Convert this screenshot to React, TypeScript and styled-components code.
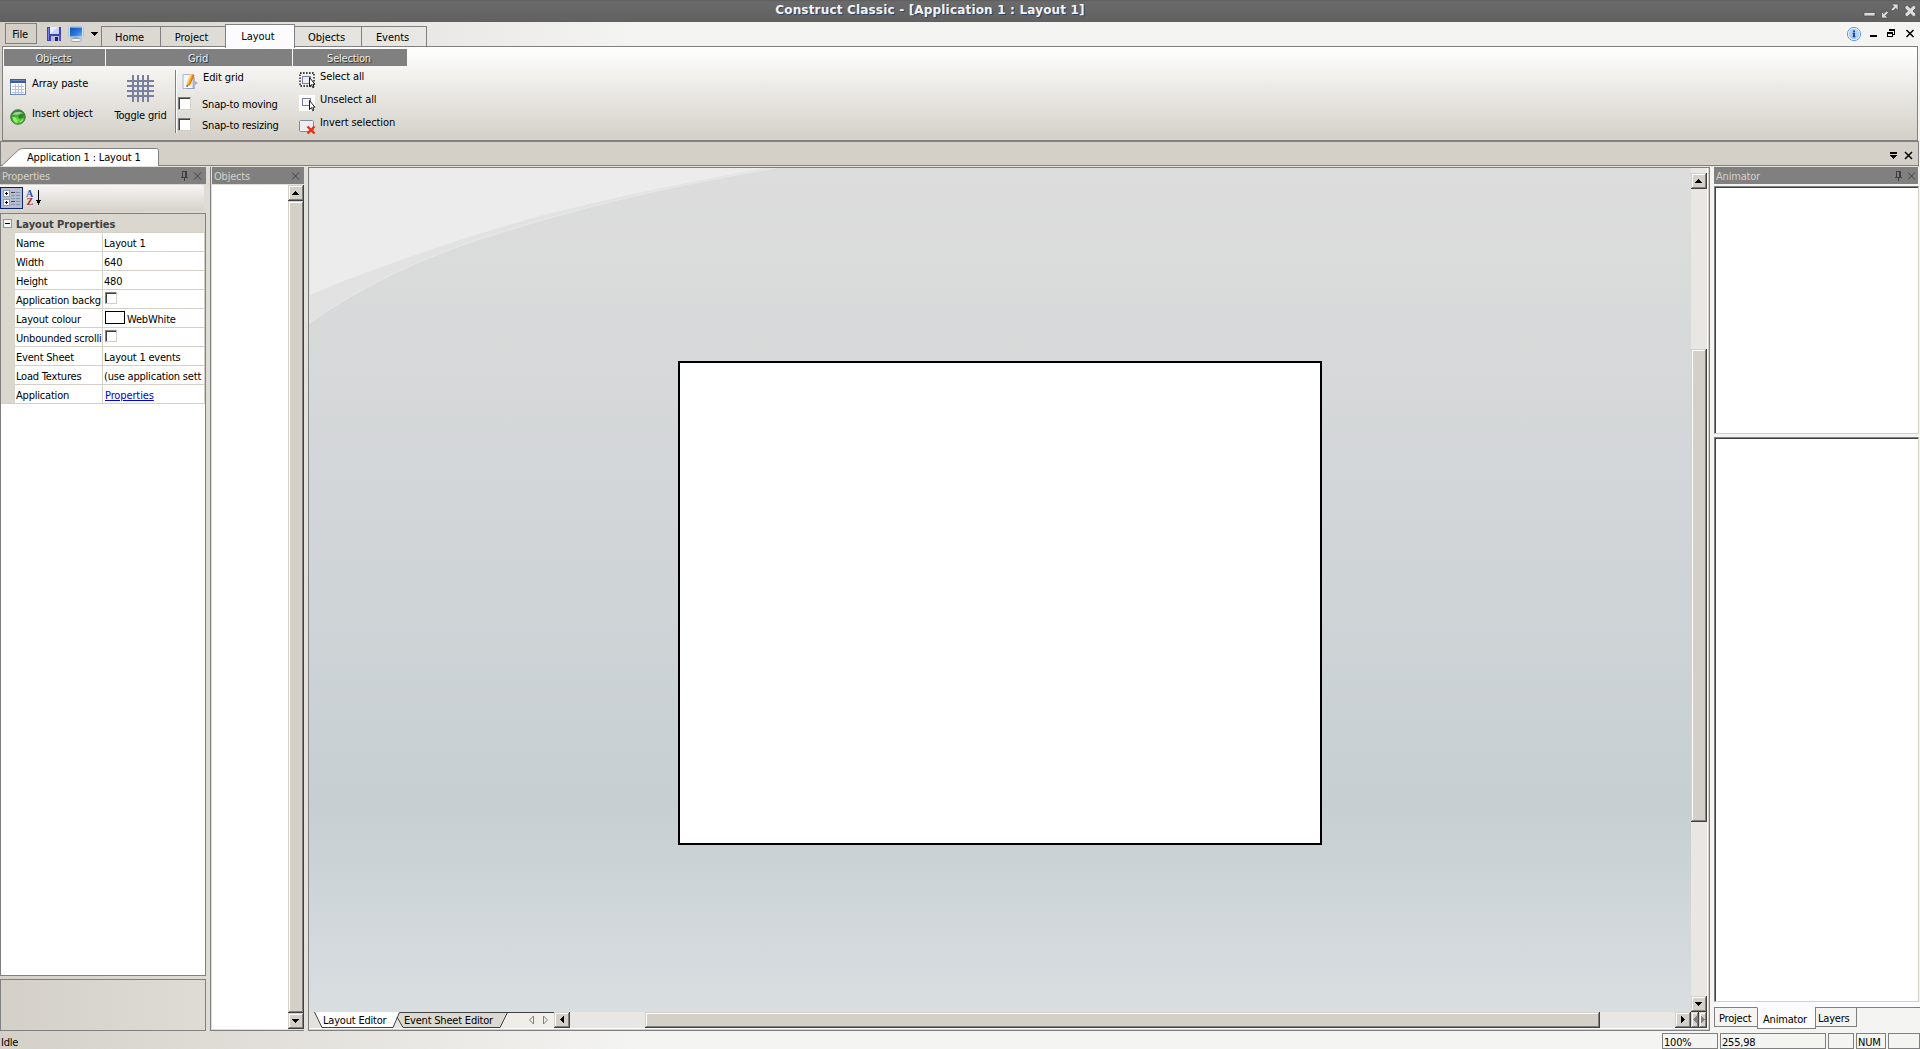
import React from "react";
import styled, { createGlobalStyle, css } from "styled-components";

const face = "#d4d0c8";
const gray = "#808080";
const dark = "#404040";

const GlobalStyle = createGlobalStyle`
  * { box-sizing: border-box; }
  html, body { margin: 0; padding: 0; overflow: hidden; }
  body {
    font-family: "DejaVu Sans Condensed", "DejaVu Sans", sans-serif;
    font-stretch: condensed;
    font-size: 11px;
    line-height: 16px;
    letter-spacing: -0.2px;
    color: #000;
    white-space: nowrap;
    cursor: default;
  }
  svg { display: block; flex: none; }
`;

const raised = css`
  background: ${face};
  box-shadow: inset -1px -1px 0 ${dark}, inset 1px 1px 0 ${face},
    inset -2px -2px 0 ${gray}, inset 2px 2px 0 #fff;
`;

const Window = styled.div`
  width: 1920px;
  height: 1049px;
  display: flex;
  flex-direction: column;
  background: linear-gradient(to right, ${face} 0, #f4f4f2 640px);
`;

/* ---------- title bar ---------- */
const TitleBar = styled.header`
  height: 22px;
  display: flex;
  background: linear-gradient(#5c5c5c 0, #6a6a6a 2px, #616161 21px, #5c5c5c 22px);
`;
const Title = styled.h1`
  flex: 1;
  margin: 0;
  text-align: center;
  font: bold 12px/21px "DejaVu Sans", sans-serif;
  font-stretch: normal;
  letter-spacing: 0.18px;
  color: #f2f2f2;
  text-shadow: 1px 1px 0 #2d4468;
`;
const TitleButtons = styled.div`
  width: 60px;
  padding-left: 3px;
`;

/* ---------- menu row ---------- */
const MenuRow = styled.nav`
  height: 24px;
  display: flex;
  align-items: flex-start;
`;
const FileButton = styled.button`
  width: 32px;
  height: 21px;
  margin: 1px 10px 0 5px;
  padding: 2px 2px 0 0;
  border: 1px solid ${gray};
  background: ${face};
  font: inherit;
  letter-spacing: inherit;
`;
const QuickIcons = styled.div`
  display: flex;
  width: 54px;
  height: 24px;
  padding-top: 4px;
`;
const RibbonTab = styled.div<{ $w: number; $active?: boolean }>`
  width: ${(p) => p.$w}px;
  height: ${(p) => (p.$active ? 24 : 21)}px;
  margin-top: ${(p) => (p.$active ? 2 : 4)}px;
  margin-right: -1px;
  padding-top: ${(p) => (p.$active ? 4 : 3)}px;
  padding-right: ${(p) => (p.$active ? 4 : 3)}px;
  text-align: center;
  letter-spacing: -0.05px;
  border: 1px solid ${gray};
  border-bottom: ${(p) => (p.$active ? "0" : `1px solid ${gray}`)};
  background: ${(p) => (p.$active ? "#fcfcfe" : "transparent")};
  position: relative;
  z-index: ${(p) => (p.$active ? 2 : 1)};
`;
const MdiButtons = styled.div`
  margin-left: auto;
  width: 74px;
  height: 24px;
  padding-top: 4px;
`;

/* ---------- ribbon ---------- */
const Ribbon = styled.section`
  width: 1916px;
  height: 95px;
  flex: none;
  margin-left: 2px;
  padding: 2px 0 0 1px;
  display: flex;
  border: 1px solid ${gray};
  background: linear-gradient(#fff, ${face});
`;
const Group = styled.div<{ $w: number }>`
  width: ${(p) => p.$w}px;
  margin-right: 1px;
`;
const GroupTitle = styled.div`
  height: 17px;
  padding: 2px 2px 0 0;
  line-height: 15px;
  text-align: center;
  background: ${gray};
  color: #ececec;
  text-shadow: 1px 1px 0 #333;
`;
const GroupBody = styled.div<{ $top: number; $row?: boolean }>`
  display: flex;
  flex-direction: ${(p) => (p.$row ? "row" : "column")};
  padding-top: ${(p) => p.$top}px;
`;
const Command = styled.div<{ $h: number; $left?: number; $gap?: number }>`
  display: flex;
  align-items: flex-start;
  gap: ${(p) => p.$gap ?? 6}px;
  height: ${(p) => p.$h}px;
  padding-left: ${(p) => p.$left ?? 6}px;
  letter-spacing: -0.1px;
  svg { margin-top: 3px; }
`;
const BigCommand = styled.div`
  width: 69px;
  display: flex;
  flex-direction: column;
  align-items: center;
  gap: 6px;
  padding-top: 5px;
`;
const Separator = styled.div`
  width: 2px;
  height: 63px;
  border-left: 1px solid ${gray};
  border-right: 1px solid #fff;
`;
const Check = styled.span<{ $size?: number }>`
  flex: none;
  width: ${(p) => p.$size ?? 13}px;
  height: ${(p) => p.$size ?? 13}px;
  background: #fff;
  border: 1px solid;
  border-color: ${gray} ${face} ${face} ${gray};
  box-shadow: inset 1px 1px 0 ${dark};
`;
const CheckRow = styled.label`
  display: flex;
  gap: 11px;
  height: 21px;
  padding-left: 1px;
`;

/* ---------- document tabs ---------- */
const DocBar = styled.div`
  height: 26px;
  flex: none;
  display: flex;
  width: 1919px;
  border: 1px solid ${gray};
  border-bottom: 1px solid #e4e2dc;
  background: linear-gradient(${gray}, ${gray}) 0 23px / 100% 1px no-repeat, ${face};
`;
const DocTab = styled.div`
  position: relative;
  width: 158px;
  height: 24px;
  padding: 8px 0 0 26px;
  svg { position: absolute; left: 0; top: 5px; }
  span { position: relative; letter-spacing: -0.16px; }
`;
const DocButtons = styled.div`
  margin-left: auto;
  width: 29px;
  padding-top: 9px;
`;

/* ---------- main area ---------- */
const Main = styled.main`
  height: 864px;
  flex: none;
  display: flex;
`;
const PaneHeader = styled.div`
  height: 17px;
  flex: none;
  display: flex;
  padding: 2px 4px 0 2px;
  line-height: 15px;
  background: ${gray};
  color: ${face};
  svg { margin: 2px 0 0 auto; }
`;
const PropertiesPane = styled.aside`
  width: 206px;
  margin-right: 4px;
  display: flex;
  flex-direction: column;
`;
const PropToolbar = styled.div`
  height: 26px;
  width: 204px;
  margin: 1px 0 2px;
  padding-top: 2px;
  display: flex;
  gap: 3px;
  background: linear-gradient(#f6f5f4, #d6d2ca);
  border-radius: 0 2px 2px 0;
`;
const SortButton = styled.div<{ $on?: boolean }>`
  width: ${(p) => (p.$on ? 23 : 20)}px;
  height: 22px;
  ${(p) => p.$on ? css`border: 1px solid #0a246a; background: #b6bdd2;` : css`padding-top: 2px;`}
`;
const PropGrid = styled.div`
  height: 763px;
  border: 1px solid ${gray};
  background: #fff;
`;
const Category = styled.div`
  height: 18px;
  padding: 3px 0 0 2px;
  display: flex;
  gap: 4px;
  font-weight: bold;
  color: ${dark};
  background: #dad7cf;
  letter-spacing: 0;
  svg { margin-top: 2px; }
`;
const PropRow = styled.div`
  height: 19px;
  width: 204px;
  display: grid;
  grid-template-columns: 87px 101px;
  column-gap: 1px;
  padding: 1px 1px 0 14px;
  background: linear-gradient(to right, #dad7cf 14px, ${face} 14px);
`;
const Cell = styled.div`
  overflow: hidden;
  padding: 3px 0 0 1px;
  background: #fff;
  display: flex;
`;
const WidgetCell = styled(Cell)`
  padding-left: 2px;
  ${Check} { margin-top: -1px; }
`;
const PropEnd = styled.div`
  height: 1px;
  background: ${face};
`;
const Swatch = styled.span`
  width: 20px;
  height: 13px;
  margin: -1px 2px 0 0;
  border: 1px solid #000;
  background: #fff;
`;
const Link = styled.span`
  color: #0000e0;
  text-decoration: underline;
  letter-spacing: -0.12px;
`;
const HelpBox = styled.div`
  height: 52px;
  margin-top: 3px;
  border: 1px solid ${gray};
`;

const ObjectsPane = styled.aside`
  width: 94px;
  margin-right: 4px;
  display: flex;
  flex-direction: column;
  border-left: 1px solid ${gray};
  border-bottom: 1px solid ${gray};
  padding-left: 1px;
`;
const ObjectsBody = styled.div`
  margin-top: 1px;
  height: 844px;
  display: flex;
  background: #fff;
  justify-content: flex-end;
`;
const Bar = styled.div<{ $h?: boolean }>`
  display: flex;
  flex: none;
  flex-direction: ${(p) => (p.$h ? "row" : "column")};
  ${(p) => (p.$h ? "height: 16px; flex: 1;" : "width: 16px;")}
  background: #e8e7e3;
`;
const ScrollButton = styled.div<{ $w?: number }>`
  width: ${(p) => p.$w ?? 16}px;
  height: 16px;
  flex: none;
  display: flex;
  align-items: center;
  justify-content: center;
  padding: 0 1px 1px 0;
  ${raised}
`;
const Track = styled.div<{ $len: number }>`
  flex: 0 0 ${(p) => p.$len}px;
`;
const Thumb = styled.div`
  flex: 1;
  ${raised}
`;

const Editor = styled.section`
  width: 1402px;
  height: 864px;
  margin-right: 4px;
  display: flex;
  flex-direction: column;
  border: 1px solid ${gray};
  box-shadow: inset -1px -1px 0 ${face}, inset -2px -2px 0 #fff;
`;
const EditorTop = styled.div`
  display: flex;
  height: 844px;
`;
const Canvas = styled.div`
  position: relative;
  width: 1382px;
  height: 844px;
  background: linear-gradient(#dddddd 0, #dadbdb 100px, #d6d8d9 210px, #cfd4d7 420px, #c7cfd2 640px, #ccd3d6 700px, #d9dee1 844px);
`;
const Sheet = styled.div`
  position: absolute;
  left: 369px;
  top: 193px;
  width: 644px;
  height: 484px;
  border: 2px solid #000;
  background: #fff;
`;
const EditorBottom = styled.div`
  display: flex;
  height: 16px;
  width: 1398px;
`;
const SheetTabs = styled.div`
  position: relative;
  width: 245px;
  height: 16px;
  display: flex;
  padding: 1px 0 0 14px;
  > svg { position: absolute; left: 0; top: 0; }
`;
const TabLabel = styled.span<{ $w: number }>`
  position: relative;
  width: ${(p) => p.$w}px;
`;

const AnimatorPane = styled.aside`
  width: 206px;
  display: flex;
  flex-direction: column;
`;
const AnimHeader = styled(PaneHeader)`
  width: 204px;
  padding-right: 2px;
`;
const Sunken = styled.div<{ $h: number; $mt: number }>`
  height: ${(p) => p.$h}px;
  width: 205px;
  margin-top: ${(p) => p.$mt}px;
  background: #fff;
  border: 1px solid;
  border-color: ${gray} ${face} ${face} ${gray};
  box-shadow: inset 1px 1px 0 ${dark};
`;
const PaneTabs = styled.div`
  height: 27px;
  display: flex;
  padding-top: 5px;
  background: linear-gradient(#fcfcfe 5px, ${gray} 5px, ${gray} 6px, transparent 6px);
`;
const PaneTab = styled.div<{ $w: number; $active?: boolean }>`
  width: ${(p) => p.$w}px;
  height: ${(p) => (p.$active ? 22 : 20)}px;
  margin-right: -1px;
  padding: ${(p) => (p.$active ? "4px 0 0 5px" : "3px 0 0 4px")};
  border: 1px solid ${gray};
  border-top-color: ${(p) => (p.$active ? "#fcfcfe" : gray)};
  background: ${(p) => (p.$active ? "#fcfcfe" : "transparent")};
  &:last-child { padding-left: 2px; }
`;

/* ---------- status bar ---------- */
const Status = styled.footer`
  height: 18px;
  display: flex;
  gap: 2px;
  padding: 2px 0 0 1px;
  line-height: 14px;
`;
const StatusText = styled.div`
  flex: 1;
  padding-top: 3px;
`;
const StatusPane = styled.div<{ $w: number }>`
  width: ${(p) => p.$w}px;
  height: 16px;
  padding: 2px 0 0 1px;
  border: 1px solid ${gray};
`;

/* ---------- drawings ---------- */
const Arrow = ({ dir, color = "#000" }: { dir: "up" | "down" | "left" | "right"; color?: string }) => {
  const d = {
    up: "M3 0h1v1h1v1h1v1h1v1H0V3h1V2h1V1h1z",
    down: "M0 0h7v1H6v1H5v1H4v1H3V3H2V2H1V1H0z",
    left: "M3 0h1v7H3V6H2V5H1V4H0V3h1V2h1V1h1z",
    right: "M0 0h1v1h1v1h1v1h1v1H3v1H2v1H1v1H0z",
  }[dir];
  const vertical = dir === "up" || dir === "down";
  return (
    <svg width={vertical ? 7 : 4} height={vertical ? 4 : 7} shapeRendering="crispEdges">
      <path d={d} fill={color} />
    </svg>
  );
};

const WindowIcons = () => (
  <svg width="57" height="22">
    <g stroke="#3c3c3c" strokeWidth="0.6" fill="#dcdcdc">
      <rect x="1" y="12.5" width="11" height="3.4" rx="0.6" />
      <path d="M28.5 4H35v6.5l-2.2-2.2-3 2.8-1.8-1.8 3-2.8z" />
      <path d="M25 18h-6.500v-6.500l2.200 2.200 3-2.800 1.800 1.800-3 2.800z" />
      <path d="M42 6.300l2.400-1 3 3 3-3 2.300 1v2l-2.700 2.700 2.700 2.700v2l-2.300 1-3-3-3 3-2.400-1v-2l2.700-2.700-2.700-2.700z" />
    </g>
  </svg>
);

const SaveIcon = () => (
  <svg width="16" height="18" viewBox="0 0 16 18">
    <rect x="0" y="1" width="14" height="14" fill="#3f43b0" />
    <rect x="1" y="2" width="1" height="12" fill="#777ce0" />
    <rect x="3" y="1" width="9" height="7" fill="#e9effa" />
    <path d="M4 7L11 1h1v7H4z" fill="#c4d5f4" />
    <rect x="4" y="10" width="8" height="5" fill="#b6b9d8" />
    <rect x="8" y="11" width="3" height="4" fill="#1f2270" />
    <rect x="12" y="9" width="2" height="6" fill="#5356c8" />
  </svg>
);
const MonitorIcon = () => (
  <svg width="18" height="18" viewBox="0 0 18 18">
    <defs>
      <linearGradient id="screen" x1="0" y1="0" x2="1" y2="1">
        <stop offset="0" stopColor="#0c4fb8" />
        <stop offset="0.6" stopColor="#2c7be0" />
        <stop offset="1" stopColor="#6db8f4" />
      </linearGradient>
    </defs>
    <rect x="0.5" y="0.5" width="15" height="11" rx="1" fill="#d7e4f4" stroke="#b6c4d8" />
    <rect x="2" y="1.5" width="12" height="9" fill="url(#screen)" />
    <path d="M6 11.5h4l1 2H5z" fill="#7f90a6" />
    <ellipse cx="8" cy="14" rx="5.5" ry="1.7" fill="#f2f4f6" stroke="#868e98" strokeWidth="0.8" />
  </svg>
);
const MdiIcons = () => (
  <svg width="74" height="18">
    <circle cx="8" cy="8" r="6.6" fill="#fff" stroke="#5b98ea" strokeWidth="1" />
    <circle cx="8" cy="8" r="4.9" fill="#b5d3fa" stroke="#8db9f2" strokeWidth="0.6" />
    <path d="M7 4.5h2v2H7zM6.5 7H9v3.3h.6v1H6.4v-1H7V8h-.5z" fill="#1c4a9c" />
    <g shapeRendering="crispEdges">
      <path d="M24 9h7v2h-7z" />
      <path d="M43 3h6v5h-1V5h-5z M43 3h1v2h-1z M47 8h2v1h-2z" />
      <path d="M41 6h6v5h-6z M42 8v2h4V8z" fillRule="evenodd" />
    </g>
    <path d="M60.5 4l7 7M67.5 4l-7 7" stroke="#000" strokeWidth="1.5" />
  </svg>
);
const ArrayIcon = () => (
  <svg width="16" height="16" shapeRendering="crispEdges">
    <path d="M0 0h16v16H0z" fill="#6f86ba" />
    <path d="M0 0h16v4H0z" fill="#3c5a9c" />
    <path d="M1 1h14v1H1z" fill="#6884bc" />
    <path d="M1 4h14v11H1z" fill="#fff" />
    <path d="M2 7h12M2 10h12M2 13h12M5.5 5v10M8.5 5v10M11.5 5v10" stroke="#b9c3dc" />
  </svg>
);
const InsertIcon = () => (
  <svg width="16" height="16">
    <defs>
      <radialGradient id="globe" cx="0.5" cy="0.7" r="0.65">
        <stop offset="0" stopColor="#6fe446" />
        <stop offset="0.6" stopColor="#38a52c" />
        <stop offset="1" stopColor="#2b7f2c" />
      </radialGradient>
    </defs>
    <circle cx="8" cy="8" r="7.3" fill="url(#globe)" stroke="#4f7a4f" />
    <path d="M2.500 6c1-4 9-4.500 11-1-2-1-3 0-5 .500S4.500 5.500 2.500 6z" fill="#cfe8ca" opacity="0.7" />
    <path d="M8 7l3-2 3 1-2 3-3 1z" fill="#2f8526" />
    <path d="M2.500 7.500l3 1 1.500 2.500.500 3c-3 0-5-3-5-6.500zM10 12.500l3.500-3.500c0 2-1 3.500-3 4.500z" fill="#9af06c" />
  </svg>
);
const GridIcon = () => (
  <svg width="27" height="27" shapeRendering="crispEdges">
    <path
      d="M5 0h2v27H5zM10 0h2v27h-2zM15 0h2v27h-2zM20 0h2v27h-2zM0 5h27v2H0zM0 10h27v2H0zM0 15h27v2H0zM0 20h27v2H0z"
      fill="#7b7f9e"
    />
  </svg>
);
const EditIcon = () => (
  <svg width="16" height="16">
    <path d="M1 1.5h10v14H1z" fill="#f4f7fd" stroke="#a9b6d4" />
    <path d="M12 4v12H4" fill="none" stroke="#7d88a8" />
    <path d="M13 8l3 2-3 2z" fill="#aab" />
    <path d="M8.5 1l4 1-4.5 10-3.5 2 .4-4z" fill="#f7a51c" />
    <path d="M11 1.5l1.5.6L8 12l-1.3.8z" fill="#e06f10" />
    <path d="M8.5 1l1.5.2L5.8 11l-1-.8z" fill="#ffd873" />
    <path d="M4.5 14l.3-2 1.4.9z" fill="#222" />
  </svg>
);
const Cursor = () => (
  <path d="M10.5 5.5v9l2-1.8 1.2 3 1.3-.6-1.1-2.9h2z" fill="#fff" stroke="#000" strokeWidth="0.9" />
);
const SelectIcon = () => (
  <svg width="17" height="17">
    <rect x="1" y="1" width="14" height="13" fill="none" stroke="#444" strokeWidth="1.8" strokeDasharray="1.6 1.4" />
    <rect x="3.5" y="4.5" width="8" height="7" fill="#eceef6" stroke="#7c80a0" />
    <Cursor />
  </svg>
);
const UnselectIcon = () => (
  <svg width="17" height="17">
    <rect width="16" height="16" fill="#fff" />
    <rect x="3.5" y="3.5" width="8" height="7" fill="#f4f4fa" stroke="#7c80a0" />
    <Cursor />
  </svg>
);
const InvertIcon = () => (
  <svg width="17" height="17">
    <rect x="0.5" y="2.5" width="14" height="11" rx="1" fill="#eeeef2" stroke="#85879c" />
    <path d="M8.5 8.5l7 7M15.5 8.5l-7 7" stroke="#e83010" strokeWidth="2.4" />
  </svg>
);
const PaneIcons = ({ pin }: { pin?: boolean }) => (
  <svg width="22" height="12">
    {pin && (
      <path
        d="M2 0h5v6h1v1H5v3H4V7H1V6h1zM3 1v5h2V1z"
        fill={dark}
        fillRule="evenodd"
        shapeRendering="crispEdges"
      />
    )}
    <path d="M14 1.5l7 7M21 1.5l-7 7" stroke={dark} />
  </svg>
);
const CategorizedIcon = () => (
  <svg width="21" height="20">
    {[3, 12].map((y) => (
      <g key={y} shapeRendering="crispEdges">
        <rect x="2.5" y={y - 0.5} width="6" height="6" fill="#fff" stroke="#8ba0bb" />
        <path d={`M4 ${y + 2}h3v1H4zM5 ${y + 1}h1v3H5z`} />
        <path d={`M10 ${y + 1}h4v1h-4z`} fill="#444" />
        <path d={`M10 ${y + 4}h4v1h-4zM15 ${y + 1}h4v1h-4zM15 ${y + 4}h4v1h-4z`} fill="#8a94a8" />
      </g>
    ))}
    <path d="M10 10.5h4M15 10.5h4" stroke="#8a94a8" />
  </svg>
);
const AlphaIcon = () => (
  <svg width="18" height="20">
    <text x="0" y="8" fontFamily="Liberation Serif" fontSize="10" fontWeight="bold" fill="#2a55a8" letterSpacing="0">A</text>
    <text x="0.4" y="16" fontFamily="Liberation Serif" fontSize="10" fontWeight="bold" fill="#983030" letterSpacing="0">Z</text>
    <path d="M12 1h1v10h2v1h-1v2h-1v2h-1v-2h-1v-2h-1v-1h2z" shapeRendering="crispEdges" />
  </svg>
);

const rows: [string, React.ReactNode][] = [
  ["Name", "Layout 1"],
  ["Width", "640"],
  ["Height", "480"],
  ["Application backg", <Check $size={12} />],
  ["Layout colour", <><Swatch />WebWhite</>],
  ["Unbounded scrolli", <Check $size={12} />],
  ["Event Sheet", "Layout 1 events"],
  ["Load Textures", "(use application sett"],
  ["Application", <Link>Properties</Link>],
];

export default function App() {
  return (
    <Window>
      <GlobalStyle />
      <TitleBar>
        <Title>Construct Classic - [Application 1 : Layout 1]</Title>
        <TitleButtons><WindowIcons /></TitleButtons>
      </TitleBar>

      <MenuRow>
        <FileButton>File</FileButton>
        <QuickIcons>
          <SaveIcon />
          <svg width="5" height="1" />
          <MonitorIcon />
          <svg width="12" height="14" shapeRendering="crispEdges">
            <path d="M5 6h7v1h-1v1h-1v1H9v1H8V9H7V8H6V7H5z" />
          </svg>
        </QuickIcons>
        <RibbonTab $w={60}>Home</RibbonTab>
        <RibbonTab $w={66}>Project</RibbonTab>
        <RibbonTab $w={70} $active>Layout</RibbonTab>
        <RibbonTab $w={68}>Objects</RibbonTab>
        <RibbonTab $w={66}>Events</RibbonTab>
        <MdiButtons><MdiIcons /></MdiButtons>
      </MenuRow>

      <Ribbon>
        <Group $w={101}>
          <GroupTitle>Objects</GroupTitle>
          <GroupBody $top={10}>
            <Command $h={30}><ArrayIcon />Array paste</Command>
            <Command $h={30}><InsertIcon />Insert object</Command>
          </GroupBody>
        </Group>
        <Group $w={186}>
          <GroupTitle>Grid</GroupTitle>
          <GroupBody $top={4} $row>
            <BigCommand><GridIcon />Toggle grid</BigCommand>
            <Separator />
            <div>
              <Command $h={27} $left={5} $gap={5}><EditIcon />Edit grid</Command>
              <CheckRow><Check />Snap-to moving</CheckRow>
              <CheckRow><Check />Snap-to resizing</CheckRow>
            </div>
          </GroupBody>
        </Group>
        <Group $w={114}>
          <GroupTitle>Selection</GroupTitle>
          <GroupBody $top={3}>
            <Command $h={23} $gap={4}><SelectIcon />Select all</Command>
            <Command $h={23} $gap={4}><UnselectIcon />Unselect all</Command>
            <Command $h={23} $gap={4}><InvertIcon />Invert selection</Command>
          </GroupBody>
        </Group>
      </Ribbon>

      <DocBar>
        <DocTab>
          <svg width="159" height="19">
            <path d="M1 18.5L18 2.5Q20 1.5 23 1.5H155.5Q157.5 1.5 157.5 3.5V18.5" fill="#fff" stroke={gray} />
            <path d="M2 18h155v1H2z" fill="#fff" />
          </svg>
          <span>Application 1 : Layout 1</span>
        </DocTab>
        <DocButtons>
          <svg width="26" height="10">
            <path d="M1 1h7v2H1zM1 4h7v1H7v1H6v1H5v1H4V7H3V6H2V5H1z" shapeRendering="crispEdges" />
            <path d="M16 1l7 7M23 1l-7 7" stroke="#000" strokeWidth="1.5" />
          </svg>
        </DocButtons>
      </DocBar>

      <Main>
        <PropertiesPane>
          <PaneHeader>Properties<PaneIcons pin /></PaneHeader>
          <PropToolbar>
            <SortButton $on><CategorizedIcon /></SortButton>
            <SortButton><AlphaIcon /></SortButton>
          </PropToolbar>
          <PropGrid>
            <Category>
              <svg width="9" height="9" shapeRendering="crispEdges">
                <rect x="0.5" y="0.5" width="8" height="8" fill="#f4f6f8" stroke="#7b9ab5" />
                <path d="M2 4h5v1H2z" />
              </svg>
              Layout Properties
            </Category>
            {rows.map(([name, value]) => (
              <PropRow key={name}>
                <Cell>{name}</Cell>
                {typeof value === "string" ? <Cell>{value}</Cell> : <WidgetCell>{value}</WidgetCell>}
              </PropRow>
            ))}
            <PropEnd />
          </PropGrid>
          <HelpBox />
        </PropertiesPane>

        <ObjectsPane>
          <PaneHeader>Objects<PaneIcons /></PaneHeader>
          <ObjectsBody>
            <Bar>
              <ScrollButton><Arrow dir="up" /></ScrollButton>
              <Thumb />
              <ScrollButton><Arrow dir="down" /></ScrollButton>
            </Bar>
          </ObjectsBody>
        </ObjectsPane>

        <Editor>
          <EditorTop>
            <Canvas>
              <svg width="480" height="160">
                <path d="M0 155.5C50 120 110 90 184 67S340 21 468 0H0z" fill="#e2e2e2" />
                <path d="M0 155.5C50 120 110 90 184 67S340 21 468 0" fill="none" stroke="#ebebeb" strokeWidth="0.8" />
                <path d="M1 127C50 105 170 64 224 50S360 17 458 0H1z" fill="#ececec" />
              </svg>
              <Sheet />
            </Canvas>
            <Bar>
              <Track $len={5} />
              <ScrollButton><Arrow dir="up" /></ScrollButton>
              <Track $len={160} />
              <Thumb />
              <Track $len={174} />
              <ScrollButton><Arrow dir="down" /></ScrollButton>
            </Bar>
          </EditorTop>
          <EditorBottom>
            <SheetTabs>
              <svg width="245" height="16">
                <path d="M5.5 0L13 15.5H84L90.5 0z" fill="#fff" />
                <path d="M88 5l6 10.5H191L198.5 0.5H91z" fill="#dcd9d2" />
                <path d="M5.5 0L13 15.5H84L90.5 0.5H245M88 5l6 10.5H191L198.5 0.5" fill="none" stroke={dark} />
                <path d="M224.5 4v8l-4-4zM234.5 4v8l4-4z" fill="none" stroke={gray} />
              </svg>
              <TabLabel $w={81}>Layout Editor</TabLabel>
              <TabLabel $w={100}>Event Sheet Editor</TabLabel>
            </SheetTabs>
            <Bar $h>
              <ScrollButton><Arrow dir="left" /></ScrollButton>
              <Track $len={75} />
              <Thumb />
              <Track $len={75} />
              <ScrollButton><Arrow dir="right" /></ScrollButton>
              <ScrollButton $w={8}><Arrow dir="left" color={gray} /></ScrollButton>
              <ScrollButton $w={8}><Arrow dir="right" color={gray} /></ScrollButton>
            </Bar>
          </EditorBottom>
        </Editor>

        <AnimatorPane>
          <AnimHeader>Animator<PaneIcons pin /></AnimHeader>
          <Sunken $h={248} $mt={2} />
          <Sunken $h={565} $mt={3} />
          <PaneTabs>
            <PaneTab $w={44}>Project</PaneTab>
            <PaneTab $w={59} $active>Animator</PaneTab>
            <PaneTab $w={42}>Layers</PaneTab>
          </PaneTabs>
        </AnimatorPane>
      </Main>

      <Status>
        <StatusText>Idle</StatusText>
        <StatusPane $w={56}>100%</StatusPane>
        <StatusPane $w={106}>255,98</StatusPane>
        <StatusPane $w={26} />
        <StatusPane $w={30}>NUM</StatusPane>
        <StatusPane $w={32} />
      </Status>
    </Window>
  );
}
